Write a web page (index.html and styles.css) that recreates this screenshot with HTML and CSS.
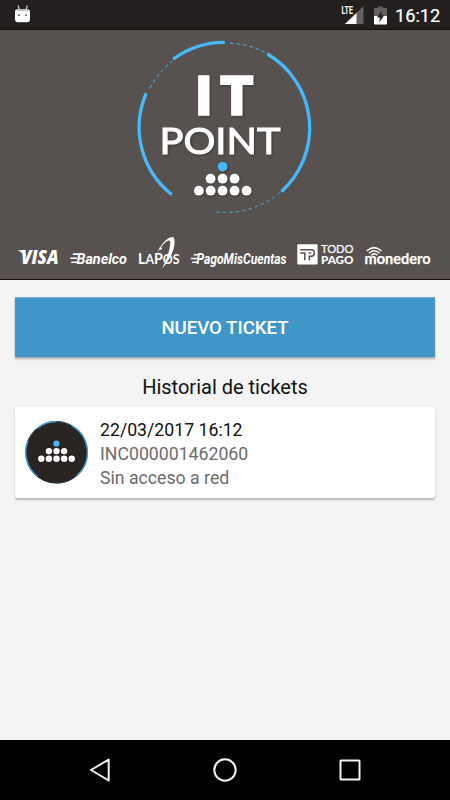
FILE: index.html
```html
<!DOCTYPE html>
<html lang="es">
<head>
<meta charset="utf-8">
<title>IT Point</title>
<link rel="stylesheet" href="styles.css">
</head>
<body>
<div class="statusbar">
  <svg class="debug" width="16" height="18" viewBox="0 0 16 18">
    <path d="M3.200.5 4.400 5M12.300.5 11 5" stroke="#ccc" stroke-width="1.200" fill="none"/>
    <path d="M0 6.500Q0 4.500 2 4.500H13Q15 4.500 15 6.500V14Q15 17.300 12 17.300H3Q0 17.300 0 14Z" fill="#fff"/>
    <path d="M1.500 4H13.500L12.500 6H2.500Z" fill="#bbb"/>
    <path d="M3 9.200h2v1.800H3zM10 9.200h2v1.800h-2z" fill="#777"/>
  </svg>
  <svg class="signal" width="24" height="20" viewBox="0 0 24 20">
    <path d="M23.500 1V19H5Z" fill="#63605f"/>
    <path d="M16.500 8V19H5Z" fill="#fff"/>
    <text class="lte" x="1.500" y="9" textLength="11.500" lengthAdjust="spacingAndGlyphs">LTE</text>
  </svg>
  <svg class="battery" width="13" height="19" viewBox="0 0 13 19">
    <path d="M4 .5h5V2h3q1 0 1 1v7H0V3q0-1 1-1h3Z" fill="#63605f"/>
    <path d="M0 10h13v7.500q0 1-1 1H1q-1 0-1-1Z" fill="#fff"/>
    <path d="M7.800 4.500 3 11.500h3L5.200 16.500 10.200 9.300H7.500Z" fill="#231f1e"/>
  </svg>
  <span class="clock">16:12</span>
</div>
<header class="hero">
  <svg width="450" height="249" viewBox="0 30 450 249">
    <g fill="none" stroke="#45b9fc">
      <g stroke-width="3.300" stroke-linecap="round">
        <path d="M174.300 58.300A85.700 85.700 0 0 1 223.500 42.300"/>
        <path d="M268.300 54.500A85.700 85.700 0 0 1 282.300 190.700"/>
        <path d="M145.700 94.500A85.700 85.700 0 0 0 170.700 193.700"/>
      </g>
      <g stroke-width="1" stroke-dasharray="3.500 3">
        <path d="M230 43.200A85 85 0 0 1 267 53.500"/>
        <path d="M173 60.500A85 85 0 0 0 149 90"/>
        <path d="M280 192.500A85 85 0 0 1 216 212" opacity=".8"/>
      </g>
    </g>
    <g class="shadowed" fill="#fff">
      <text class="it" x="196 221.200" y="114.200">IT</text>
      <text class="point" x="159.500" y="153.700" textLength="121" lengthAdjust="spacingAndGlyphs">POINT</text>
      <circle cx="222.600" cy="166.700" r="4.800" fill="#45b9fc"/>
      <circle cx="210.600" cy="178.700" r="4.900"/><circle cx="222.600" cy="178.700" r="4.900"/><circle cx="234.600" cy="178.700" r="4.900"/>
      <circle cx="198.900" cy="190.700" r="4.900"/><circle cx="210.700" cy="190.700" r="4.900"/><circle cx="222.600" cy="190.700" r="4.900"/><circle cx="234.600" cy="190.700" r="4.900"/><circle cx="246.600" cy="190.700" r="4.900"/>
    </g>
    <g fill="#fff">
      <path d="M17.500 250.300H23Q25 250.300 25.500 252.500L26 257Q22 251.800 17.500 250.300Z"/>
      <text class="visa" x="21" y="263.500" textLength="37.500" lengthAdjust="spacingAndGlyphs">VISA</text>
      <path d="M73 253.300h5v1.600h-5.500zM70.500 257.400h6.500v1.600h-7zM71.500 261.500h5.500v1.600h-6z"/>
      <text class="brand" x="76.500" y="263.500" textLength="50.500" lengthAdjust="spacingAndGlyphs">Banelco</text>
      <text class="lapos" x="138" y="263.500" textLength="41.500" lengthAdjust="spacingAndGlyphs">L<tspan class="small">A</tspan>P<tspan class="small">OS</tspan></text>
      <path d="M157 253.500C160 245.500 167.500 236.500 172.500 237C176.500 238 174.500 250 169.500 258.500Q166 264.500 162 268.500C166.500 260 171.500 246 170 240.800C167.500 239 161.500 245.500 157 253.500Z"/>
      <circle cx="160.500" cy="248.500" r="1.300"/>
      <path d="M194 254h4.500v1.500h-5zM191 257.700h6.500v1.500h-7zM192.500 261.500h5v1.500h-5.500z"/>
      <text class="brand" x="196.500" y="263.500" textLength="90" lengthAdjust="spacingAndGlyphs">PagoMisCuentas</text>
      <rect x="297.300" y="244.300" width="20.300" height="20.300" rx="1"/>
      <path d="M300.300 249.800H311.500Q314.300 249.800 314.300 253Q314.300 256.200 311.500 256.200H309.300V260.300M300.300 253H304.800V260.300M308.800 253H311.300" fill="none" stroke="#575250" stroke-width="1.500"/>
      <text class="todo" transform="translate(321 253) scale(1 1.200)" textLength="32.500" lengthAdjust="spacingAndGlyphs">TODO</text>
      <text class="pago" transform="translate(321 264) scale(1 1.200)" textLength="32.500" lengthAdjust="spacingAndGlyphs">PAGO</text>
      <text class="monedero" x="364.500" y="263.500" textLength="66" lengthAdjust="spacingAndGlyphs">monedero</text>
      <path d="M366.800 251Q374 244.200 381.500 251M369 253.300Q374.200 248.300 379.500 253.300M371.300 255.500Q374.300 252.200 377.300 255.300" fill="none" stroke="#fff" stroke-width="1.500"/>
    </g>
  </svg>
</header>
<main class="content">
  <button class="new-ticket">NUEVO TICKET</button>
  <h1 class="heading">Historial de tickets</h1>
  <article class="ticket">
    <svg class="avatar" width="64" height="64" viewBox="-.5 -.3 64 64">
      <circle cx="32" cy="32" r="31.300" fill="#292322"/>
      <g fill="none" stroke="#3e9ccf" stroke-width="1.500">
        <path d="M13.500 7.500A30.700 30.700 0 0 1 32 1.300M47.500 5.500A30.700 30.700 0 0 1 52.500 55.200M3.500 20.500A30.700 30.700 0 0 0 12.800 56"/>
        <path d="M32 1.300A30.700 30.700 0 0 1 47.500 5.500M13.500 7.500A30.700 30.700 0 0 0 3.500 20.500M52.500 55.200A30.700 30.700 0 0 1 29 62.700" stroke="#26617e" stroke-width=".7"/>
      </g>
      <g transform="translate(.4 .6)">
        <circle cx="31.500" cy="22.700" r="3.100" fill="#45b9fc"/>
        <g fill="#fff">
          <circle cx="24" cy="30.200" r="3.200"/><circle cx="31.600" cy="30.200" r="3.200"/><circle cx="39.200" cy="30.200" r="3.200"/>
          <circle cx="16.400" cy="37.900" r="3.200"/><circle cx="24" cy="37.900" r="3.200"/><circle cx="31.600" cy="37.900" r="3.200"/><circle cx="39.200" cy="37.900" r="3.200"/><circle cx="46.800" cy="37.900" r="3.200"/>
        </g>
      </g>
    </svg>
    <div class="details">
      <div class="date">22/03/2017 16:12</div>
      <div>INC000001462060</div>
      <div>Sin acceso a red</div>
    </div>
  </article>
</main>
<nav class="navbar">
  <svg width="24" height="26" viewBox="0 0 24 26"><path d="M20.700 2.500V23.500L3 13Z"/></svg>
  <svg width="24" height="26" viewBox="0 0 24 26"><circle cx="12" cy="13" r="10.700"/></svg>
  <svg width="24" height="26" viewBox="0 0 24 26"><rect x="2.500" y="3.500" width="19" height="19" rx=".5"/></svg>
</nav>
</body>
</html>
```

FILE: styles.css
```css
* { box-sizing: border-box; }
body {
  margin: 0;
  width: 450px;
  height: 800px;
  display: flex;
  flex-direction: column;
  background: #f4f4f4;
  font-family: Roboto, sans-serif;
  overflow: hidden;
}
svg { display: block; flex: none; }
.statusbar {
  flex: none;
  height: 30px;
  display: flex;
  align-items: flex-start;
  padding: 5px 10px 0 15px;
  background: #231f1e;
  border-bottom: 1px solid #171011;
  color: #fff;
}
.signal { margin-left: auto; }
.battery { margin: 1px 8px 0 10px; }
.lte { font: 700 10px Roboto, sans-serif; fill: #fff; stroke: #231f1e; stroke-width: 2px; paint-order: stroke; }
.clock { font-size: 18.2px; line-height: 22px; font-weight: 400; -webkit-text-stroke: 0.2px #fff; width: 45px; white-space: nowrap; }
.hero {
  flex: none;
  height: 250px;
  background: #575250;
  border-bottom: 1px solid #1d0d0e;
}
.shadowed { filter: drop-shadow(1px 1px 1px rgba(0, 0, 0, .3)); }
.it { font: 900 51.5px Lato, sans-serif; stroke: #fff; stroke-width: 3.6px; }
.point { font: 400 37.5px Lato, sans-serif; stroke: #fff; stroke-width: 1.1px; }
.visa { font: italic 800 18.5px "Open Sans", sans-serif; }
.brand { font: italic 700 14.5px Roboto, sans-serif; }
.lapos { font: 700 15px Lato, sans-serif; }
.lapos .small { font-size: 13px; }
.todo { font: 400 10px Lato, sans-serif; stroke: #fff; stroke-width: .2px; }
.pago { font: 900 10px Lato, sans-serif; }
.monedero { font: 700 16px Lato, sans-serif; stroke: #fff; stroke-width: .25px; }
.content {
  flex: 1;
  padding: 17px 15px 0;
}
.new-ticket {
  display: block;
  width: 100%;
  height: 60px;
  padding: 0;
  border: 0;
  border-top: 1px solid #7fa9c6;
  background: #3f97c9;
  color: #fff;
  font: 500 18.6px Roboto, sans-serif;
  box-shadow: 0 2px 2px rgba(0, 0, 0, .3);
}
.heading {
  margin: 17px 0 6px;
  font-size: 20px;
  font-weight: 400;
  line-height: 27px;
  text-align: center;
  color: #111;
}
.ticket {
  display: flex;
  align-items: flex-start;
  height: 91px;
  padding: 11px 9px 0;
  background: #fff;
  border-radius: 2px;
  box-shadow: 0 2px 2px rgba(0, 0, 0, .24);
}
.avatar { margin-top: 2px; }
.details {
  margin-left: 12px;
  font-size: 17.7px;
  line-height: 24px;
  color: #6c6c6c;
}
.date { color: #111; }
.navbar {
  flex: none;
  height: 60px;
  display: flex;
  justify-content: space-between;
  align-items: center;
  padding: 0 88px;
  background: #000;
}
.navbar svg { fill: none; stroke: #f2f2f2; stroke-width: 2; stroke-linejoin: round; }
```
